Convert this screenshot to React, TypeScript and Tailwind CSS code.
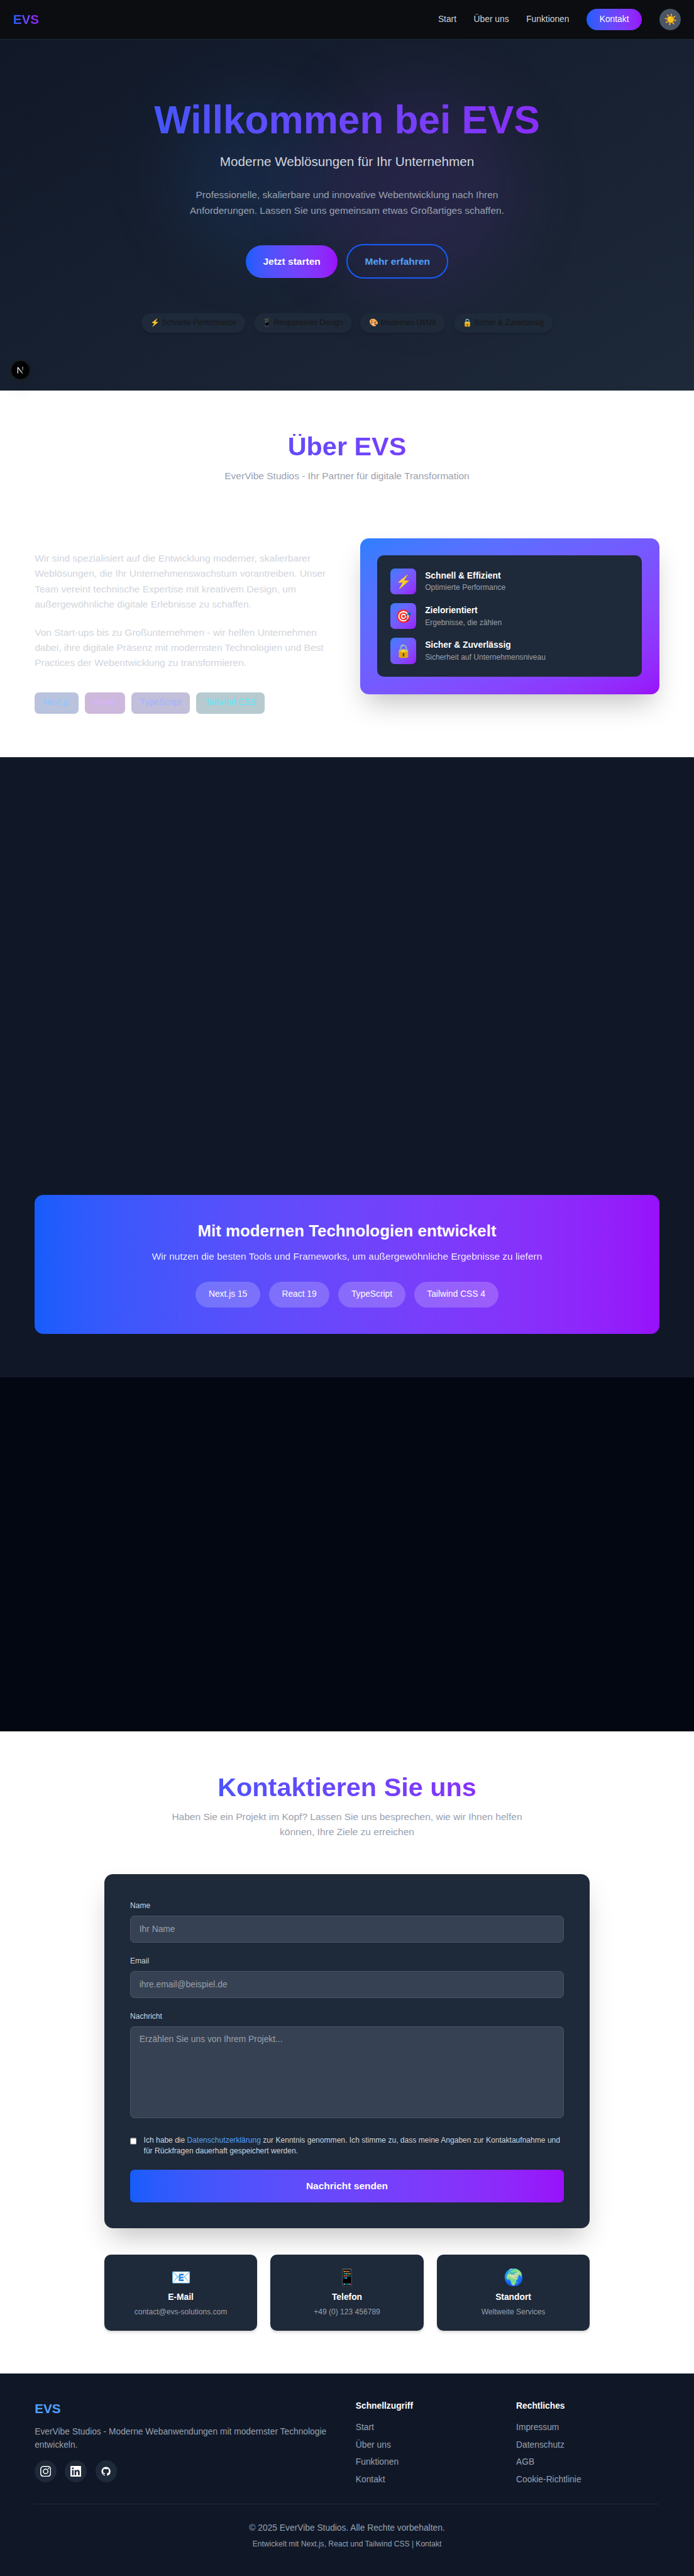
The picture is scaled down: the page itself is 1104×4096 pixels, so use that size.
import React from "react";

const grad = "bg-gradient-to-r from-blue-600 to-purple-600";
const gradText = "bg-gradient-to-r from-blue-600 to-purple-600 bg-clip-text text-transparent";

function Nav() {
  return (
    <nav className="absolute inset-x-0 top-0 z-10 flex h-[73px] items-center justify-between border-b border-gray-800 bg-[#0b0d11] px-6">
      <div className={`text-2xl font-bold ${gradText}`}>EVS</div>
      <div className="flex items-center gap-8 text-gray-300">
        <a>Start</a>
        <a>Über uns</a>
        <a>Funktionen</a>
        <a className={`rounded-full px-6 py-2 text-white ${grad}`}>Kontakt</a>
        <button className="flex size-10 items-center justify-center rounded-full bg-gray-600 text-xl">☀️</button>
      </div>
    </nav>
  );
}

function Hero() {
  const chips = ["⚡ Schnelle Performance", "📱 Responsives Design", "🎨 Modernes UI/UX", "🔒 Sicher & Zuverlässig"];
  return (
    <section className="relative flex h-[720px] flex-col items-center overflow-hidden bg-gradient-to-br from-gray-900 to-gray-800 pt-[186px] text-center">
      <div className="absolute left-1/4 top-1/4 size-72 rounded-full bg-blue-500/10 blur-3xl" />
      <div className="absolute bottom-1/4 right-1/4 size-96 rounded-full bg-purple-500/10 blur-3xl" />
      <div className="relative flex w-[1152px] flex-col items-center">
        <h1 className={`mb-6 w-full text-7xl font-bold ${gradText}`}>Willkommen bei EVS</h1>
        <p className="mb-8 text-2xl text-gray-300">Moderne Weblösungen für Ihr Unternehmen</p>
        <p className="mb-12 w-[672px] text-lg text-gray-400">
          Professionelle, skalierbare und innovative Webentwicklung nach Ihren
          <br />
          Anforderungen. Lassen Sie uns gemeinsam etwas Großartiges schaffen.
        </p>
        <div className="mb-16 flex items-center gap-4 text-lg font-semibold">
          <button className={`rounded-full px-8 py-4 text-white ${grad}`}>Jetzt starten</button>
          <button className="rounded-full border-[2.4px] border-blue-600 px-[31.6px] py-[15.6px] text-blue-400">Mehr erfahren</button>
        </div>
        <div className="flex gap-4">
          {chips.map((c) => (
            <span key={c} className="rounded-full bg-gray-800 px-4 py-2 text-sm text-[#171717] shadow-md">{c}</span>
          ))}
        </div>
      </div>
    </section>
  );
}

function DevBadge() {
  return (
    <div className="absolute left-5 top-[664px] z-10 flex size-9 items-center justify-center rounded-full bg-black/90 shadow-[0_0_0_1px_#171717,inset_0_0_0_1px_rgba(255,255,255,0.14),0_16px_32px_-8px_rgba(0,0,0,0.24)]">
      <svg width="20" height="20" viewBox="0 0 20 20" fill="none">
        <defs>
          <linearGradient id="nd" x1="8" y1="8" x2="15" y2="18" gradientUnits="userSpaceOnUse">
            <stop offset="0.5" stopColor="#fff" />
            <stop offset="1" stopColor="#fff" stopOpacity="0.1" />
          </linearGradient>
          <linearGradient id="ns" x1="14" y1="4" x2="14" y2="13" gradientUnits="userSpaceOnUse">
            <stop stopColor="#fff" />
            <stop offset="1" stopColor="#fff" stopOpacity="0" />
          </linearGradient>
        </defs>
        <path d="M5 15.8V4.6L14.4 17" stroke="url(#nd)" strokeWidth="1.4" strokeLinejoin="bevel" />
        <path d="M14 4V13" stroke="url(#ns)" strokeWidth="1.4" />
      </svg>
    </div>
  );
}

function About() {
  const items = [
    ["⚡", "Schnell & Effizient", "Optimierte Performance"],
    ["🎯", "Zielorientiert", "Ergebnisse, die zählen"],
    ["🔒", "Sicher & Zuverlässig", "Sicherheit auf Unternehmensniveau"],
  ];
  return (
    <section className="h-[676px] bg-white px-16 py-20">
      <div className="mb-16 text-center">
        <h2 className={`mb-4 text-5xl font-bold ${gradText}`}>Über EVS</h2>
        <p className="text-lg text-gray-400">EverVibe Studios - Ihr Partner für digitale Transformation</p>
      </div>
      <div className="grid grid-cols-2 items-center gap-12">
        <div className="pt-[60px] text-lg text-gray-300">
          <p className="mb-6">
            Wir sind spezialisiert auf die Entwicklung moderner, skalierbarer<br />
            Weblösungen, die Ihr Unternehmenswachstum vorantreiben. Unser<br />
            Team vereint technische Expertise mit kreativem Design, um<br />
            außergewöhnliche digitale Erlebnisse zu schaffen.
          </p>
          <p className="mb-10">
            Von Start-ups bis zu Großunternehmen - wir helfen Unternehmen<br />
            dabei, ihre digitale Präsenz mit modernsten Technologien und Best<br />
            Practices der Webentwicklung zu transformieren.
          </p>
          <div className="flex gap-3 text-base">
            <span className="rounded-lg bg-blue-900/30 px-4 py-2 text-blue-300">Next.js</span>
            <span className="rounded-lg bg-purple-900/30 px-4 py-2 text-purple-300">React</span>
            <span className="rounded-lg bg-indigo-900/30 px-4 py-2 text-indigo-300">TypeScript</span>
            <span className="rounded-lg bg-cyan-900/30 px-4 py-2 text-cyan-300">Tailwind CSS</span>
          </div>
        </div>
        <div className="rounded-2xl bg-gradient-to-br from-blue-500 to-purple-600 p-8 shadow-2xl">
          <div className="flex flex-col gap-4 rounded-xl bg-gray-800 p-6">
            {items.map(([icon, title, sub]) => (
              <div key={title} className="flex items-center gap-4">
                <div className="flex size-12 items-center justify-center rounded-lg bg-gradient-to-br from-blue-500 to-purple-600 text-2xl">{icon}</div>
                <div>
                  <div className="font-semibold text-white">{title}</div>
                  <div className="text-sm text-gray-400">{sub}</div>
                </div>
              </div>
            ))}
          </div>
        </div>
      </div>
    </section>
  );
}

function Features() {
  return (
    <section className="flex h-[1143px] flex-col justify-end bg-gray-900 px-16 pb-20">
      <div className={`rounded-2xl p-12 text-center text-white ${grad}`}>
        <h3 className="mb-4 text-3xl font-bold">Mit modernen Technologien entwickelt</h3>
        <p className="mb-8 text-lg opacity-90">Wir nutzen die besten Tools und Frameworks, um außergewöhnliche Ergebnisse zu liefern</p>
        <div className="flex justify-center gap-4">
          {["Next.js 15", "React 19", "TypeScript", "Tailwind CSS 4"].map((t) => (
            <span key={t} className="rounded-full bg-white/20 px-6 py-3">{t}</span>
          ))}
        </div>
      </div>
    </section>
  );
}

const field = "block w-full rounded-lg border border-gray-600 bg-gray-700 px-4 py-3 text-white placeholder:text-white/50";

function Contact() {
  const cards = [
    ["📧", "E-Mail", "contact@evs-solutions.com"],
    ["📱", "Telefon", "+49 (0) 123 456789"],
    ["🌍", "Standort", "Weltweite Services"],
  ];
  return (
    <section className="h-[1184.6px] bg-white px-48 pt-20">
      <div className="mb-16 text-center">
        <h2 className={`mx-auto mb-4 text-5xl font-bold ${gradText}`}>Kontaktieren Sie uns</h2>
        <p className="text-lg text-gray-400">
          Haben Sie ein Projekt im Kopf? Lassen Sie uns besprechen, wie wir Ihnen helfen<br />
          können, Ihre Ziele zu erreichen
        </p>
      </div>
      <form className="flex flex-col gap-6 rounded-2xl bg-gray-800 p-12 shadow-2xl">
        <div>
          <label className="mb-2 block text-sm text-gray-300">Name</label>
          <input className={`h-[50px] ${field}`} placeholder="Ihr Name" />
        </div>
        <div>
          <label className="mb-2 block text-sm text-gray-300">Email</label>
          <input className={`h-[50px] ${field}`} placeholder="ihre.email@beispiel.de" />
        </div>
        <div className="pb-[7px]">
          <label className="mb-2 block text-sm text-gray-300">Nachricht</label>
          <textarea className={`h-[170px] resize-none ${field}`} placeholder="Erzählen Sie uns von Ihrem Projekt..." />
        </div>
        <div className="flex items-start gap-3 text-sm text-gray-300">
          <input type="checkbox" className="mt-[5px] size-[13px] shrink-0" />
          <span>
            Ich habe die <a className="text-blue-400">Datenschutzerklärung</a> zur Kenntnis genommen. Ich stimme zu, dass meine Angaben zur Kontaktaufnahme und<br />
            für Rückfragen dauerhaft gespeichert werden.
          </span>
        </div>
        <button type="button" className={`rounded-lg py-4 text-lg font-semibold text-white ${grad}`}>Nachricht senden</button>
      </form>
      <div className="mt-12 grid grid-cols-3 gap-6">
        {cards.map(([icon, title, sub]) => (
          <div key={title} className="rounded-xl bg-gray-800 p-6 text-center shadow-md">
            <div className="mb-2 h-9 text-3xl">{icon}</div>
            <div className="mb-1 font-semibold text-white">{title}</div>
            <div className="text-sm text-gray-400">{sub}</div>
          </div>
        ))}
      </div>
    </section>
  );
}

const socials = [
  "M12 2.163c3.204 0 3.584.012 4.85.07 3.252.148 4.771 1.691 4.919 4.919.058 1.265.069 1.645.069 4.849 0 3.205-.012 3.584-.069 4.849-.149 3.225-1.664 4.771-4.919 4.919-1.266.058-1.644.07-4.85.07-3.204 0-3.584-.012-4.849-.07-3.26-.149-4.771-1.699-4.919-4.92-.058-1.265-.07-1.644-.07-4.849 0-3.204.013-3.583.07-4.849.149-3.227 1.664-4.771 4.919-4.919 1.266-.057 1.645-.069 4.849-.069zM12 0C8.741 0 8.333.014 7.053.072 2.695.272.273 2.69.073 7.052.014 8.333 0 8.741 0 12c0 3.259.014 3.668.072 4.948.2 4.358 2.618 6.78 6.98 6.98C8.333 23.986 8.741 24 12 24c3.259 0 3.668-.014 4.948-.072 4.354-.2 6.782-2.618 6.979-6.98.059-1.28.073-1.689.073-4.948 0-3.259-.014-3.667-.072-4.947-.196-4.354-2.617-6.78-6.979-6.98C15.668.014 15.259 0 12 0zm0 5.838a6.162 6.162 0 100 12.324 6.162 6.162 0 000-12.324zM12 16a4 4 0 110-8 4 4 0 010 8zm6.406-11.845a1.44 1.44 0 100 2.881 1.44 1.44 0 000-2.881z",
  "M20.447 20.452h-3.554v-5.569c0-1.328-.027-3.037-1.852-3.037-1.853 0-2.136 1.445-2.136 2.939v5.667H9.351V9h3.414v1.561h.046c.477-.9 1.637-1.85 3.37-1.85 3.601 0 4.267 2.37 4.267 5.455v6.286zM5.337 7.433a2.062 2.062 0 01-2.063-2.065 2.064 2.064 0 112.063 2.065zm1.782 13.019H3.555V9h3.564v11.452zM22.225 0H1.771C.792 0 0 .774 0 1.729v20.542C0 23.227.792 24 1.771 24h20.451C23.2 24 24 23.227 24 22.271V1.729C24 .774 23.2 0 22.222 0h.003z",
  "M12 2C6.477 2 2 6.484 2 12.017c0 4.425 2.865 8.18 6.839 9.504.5.092.682-.217.682-.483 0-.237-.008-.868-.013-1.703-2.782.605-3.369-1.343-3.369-1.343-.454-1.158-1.11-1.466-1.11-1.466-.908-.62.069-.608.069-.608 1.003.07 1.531 1.032 1.531 1.032.892 1.53 2.341 1.088 2.91.832.092-.647.35-1.088.636-1.338-2.22-.253-4.555-1.113-4.555-4.951 0-1.093.39-1.988 1.029-2.688-.103-.253-.446-1.272.098-2.65 0 0 .84-.27 2.75 1.026A9.564 9.564 0 0112 6.844c.85.004 1.705.115 2.504.337 1.909-1.296 2.747-1.027 2.747-1.027.546 1.379.202 2.398.1 2.651.64.7 1.028 1.595 1.028 2.688 0 3.848-2.339 4.695-4.566 4.943.359.309.678.92.678 1.855 0 1.338-.012 2.419-.012 2.747 0 .268.18.58.688.482A10.019 10.019 0 0022 12.017C22 6.484 17.522 2 12 2z",
];

function FooterList({ title, items }: { title: string; items: string[] }) {
  return (
    <div>
      <h4 className="mb-4 font-semibold text-white">{title}</h4>
      <ul className="flex flex-col gap-2">
        {items.map((i) => (
          <li key={i}>{i}</li>
        ))}
      </ul>
    </div>
  );
}

function Footer() {
  return (
    <footer className="h-[373px] bg-gray-900 px-16 py-12 text-gray-400">
      <div className="mb-8 grid grid-cols-4 gap-8">
        <div className="col-span-2">
          <div className="mb-4 text-2xl font-bold text-blue-400">EVS</div>
          <p className="mb-4">
            EverVibe Studios - Moderne Webanwendungen mit modernster Technologie<br />
            entwickeln.
          </p>
          <div className="flex gap-4">
            {socials.map((d, i) => (
              <a key={i} className="flex size-10 items-center justify-center rounded-full bg-gray-800 text-white">
                <svg className="size-5" viewBox="0 0 24 24" fill="currentColor"><path d={d} /></svg>
              </a>
            ))}
          </div>
        </div>
        <FooterList title="Schnellzugriff" items={["Start", "Über uns", "Funktionen", "Kontakt"]} />
        <FooterList title="Rechtliches" items={["Impressum", "Datenschutz", "AGB", "Cookie-Richtlinie"]} />
      </div>
      <div className="border-t border-gray-800 pt-8 text-center">
        <p>© 2025 EverVibe Studios. Alle Rechte vorbehalten.</p>
        <p className="mt-2 text-sm">Entwickelt mit Next.js, React und Tailwind CSS | Kontakt</p>
      </div>
    </footer>
  );
}

export default function App() {
  return (
    <div className="relative w-[1280px] whitespace-nowrap bg-white font-['Liberation_Sans',Arial,sans-serif] [zoom:0.8625]">
      <Nav />
      <Hero />
      <DevBadge />
      <About />
      <Features />
      <div className="h-[652.5px] bg-gray-950" />
      <Contact />
      <Footer />
    </div>
  );
}
